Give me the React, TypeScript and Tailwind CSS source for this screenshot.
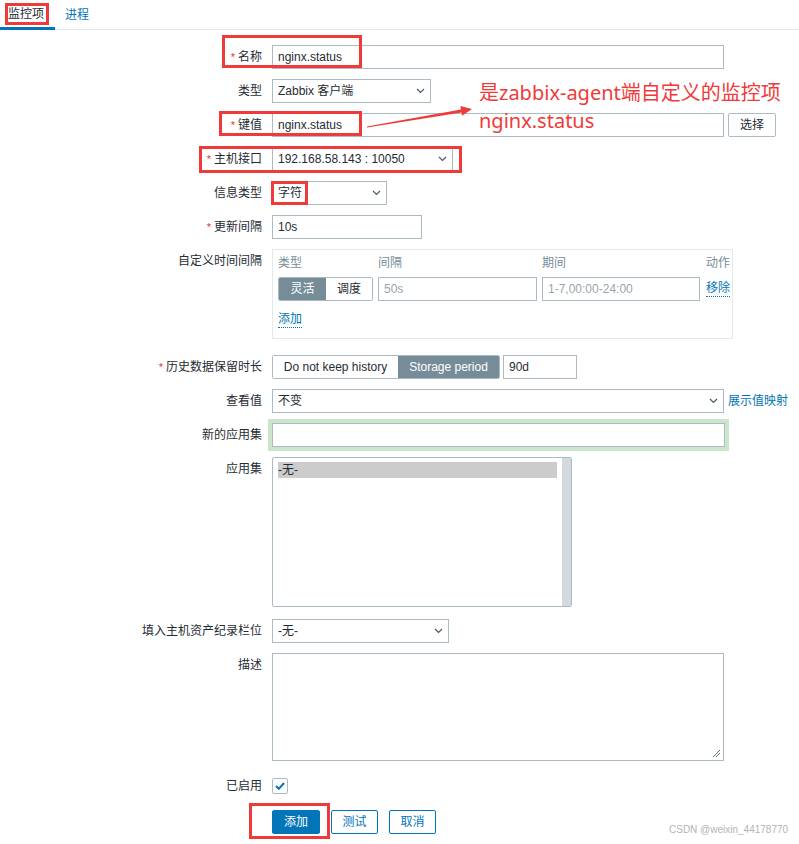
import React from 'react';

function Chevron() {
  return (
    <svg width="9" height="6" viewBox="0 0 9 6" className="shrink-0">
      <path d="M1 1l3.5 3.5L8 1" fill="none" stroke="#4f5a60" strokeWidth="1.2" />
    </svg>
  );
}

function Label({ text, required, className }: { text: string; required?: boolean; className?: string }) {
  return (
    <div className={`w-[262px] h-[24px] shrink-0 flex items-center justify-end whitespace-nowrap ${className ?? ''}`}>
      {required && <span className="text-[#e33734] mr-[3px] text-[11px]">*</span>}
      {text}
    </div>
  );
}

function Row({ label, required, className, labelClass, children }: {
  label: string;
  required?: boolean;
  className?: string;
  labelClass?: string;
  children?: React.ReactNode;
}) {
  return (
    <div className={`flex items-start ${className ?? ''}`}>
      <Label text={label} required={required} className={labelClass} />
      <div className="ml-[10px] flex items-center">{children}</div>
    </div>
  );
}

function Select({ value, width }: { value: string; width: string }) {
  return (
    <div className={`${width} h-[24px] border border-[#acbbc2] bg-white pl-[5px] pr-[5px] flex items-center justify-between`}>
      <span className="whitespace-nowrap">{value}</span>
      <Chevron />
    </div>
  );
}

function TextInput({ value, width, placeholder }: { value?: string; width: string; placeholder?: string }) {
  return (
    <input
      readOnly
      value={value ?? ''}
      placeholder={placeholder}
      className={`${width} h-[24px] border border-[#acbbc2] bg-white px-[5px] text-[12px] text-[#1f2c33] outline-none placeholder:text-[#9aa5ab]`}
    />
  );
}

function RedBox({ className }: { className: string }) {
  return <div className={`absolute border-[3px] border-[#f03a3a] pointer-events-none ${className}`} />;
}

export default function App() {
  return (
    <div className="relative w-[799px] h-[844px] overflow-hidden bg-white text-[12px] text-[#1f2c33] font-[family-name:'Liberation_Sans','Noto_Sans_CJK_SC',sans-serif]">
      {/* tabs */}
      <div className="flex h-[30px] border-b border-[#e3e8ea]">
        <div className="h-[30px] -mb-px w-[55px] pl-[8px] flex items-center border-b-[3px] border-[#0275b8]">监控项</div>
        <div className="h-[30px] -mb-px pl-[10px] flex items-center text-[#0275b8]">进程</div>
      </div>

      <div className="pt-[15px]">
        <Row label="名称" required>
          <TextInput value="nginx.status" width="w-[452px]" />
        </Row>
        <Row label="类型" className="mt-[10px]">
          <Select value="Zabbix 客户端" width="w-[159px]" />
        </Row>
        <Row label="键值" required className="mt-[10px]">
          <TextInput value="nginx.status" width="w-[452px]" />
          <button className="ml-[4px] w-[48px] h-[24px] border border-[#acbbc2] rounded-[2px] bg-white">选择</button>
        </Row>
        <Row label="主机接口" required className="mt-[10px]">
          <Select value="192.168.58.143 : 10050" width="w-[181px]" />
        </Row>
        <Row label="信息类型" className="mt-[10px]">
          <Select value="字符" width="w-[115px]" />
        </Row>
        <Row label="更新间隔" required className="mt-[10px]">
          <TextInput value="10s" width="w-[150px]" />
        </Row>

        {/* custom intervals */}
        <Row label="自定义时间间隔" className="mt-[10px]">
          <div className="w-[461px] h-[90px] border border-[#e3e8ea] pt-[4px] pl-[5px] whitespace-nowrap">
            <div className="flex h-[18px] items-center text-[#768d99]">
              <span className="w-[100px] shrink-0">类型</span>
              <span className="w-[164px] shrink-0">间隔</span>
              <span className="w-[164px] shrink-0">期间</span>
              <span className="shrink-0">动作</span>
            </div>
            <div className="flex items-center mt-[5px] h-[24px]">
              <div className="flex shrink-0 w-[95px] h-[24px] border border-[#acbbc2] rounded-[2px] overflow-hidden">
                <div className="w-[47px] bg-[#768d99] text-white flex items-center justify-center">灵活</div>
                <div className="flex-1 bg-white flex items-center justify-center">调度</div>
              </div>
              <div className="ml-[5px] shrink-0">
                <TextInput placeholder="50s" width="w-[159px]" />
              </div>
              <div className="ml-[5px] shrink-0">
                <TextInput placeholder="1-7,00:00-24:00" width="w-[158px]" />
              </div>
              <span className="ml-[6px] shrink-0 text-[#0275b8] border-b border-dotted border-[#0275b8] leading-[15px]">移除</span>
            </div>
            <div className="mt-[10px] h-[18px] flex items-center">
              <span className="text-[#0275b8] border-b border-dotted border-[#0275b8] leading-[15px]">添加</span>
            </div>
          </div>
        </Row>

        <Row label="历史数据保留时长" required className="mt-[16px]">
          <div className="flex h-[24px] border border-[#acbbc2] rounded-[2px] overflow-hidden">
            <div className="w-[125px] bg-white flex items-center justify-center">Do not keep history</div>
            <div className="w-[101px] bg-[#768d99] text-white flex items-center justify-center">Storage period</div>
          </div>
          <div className="ml-[3px]">
            <TextInput value="90d" width="w-[74px]" />
          </div>
        </Row>

        <Row label="查看值" className="mt-[10px]">
          <Select value="不变" width="w-[452px]" />
          <span className="ml-[4px] text-[#0275b8] whitespace-nowrap">展示值映射</span>
        </Row>

        <Row label="新的应用集" className="mt-[6px]" labelClass="mt-[4px]">
          <div className="-ml-[4px] p-[4px] bg-[#cce6cc]">
            <TextInput width="w-[453px]" />
          </div>
        </Row>

        <Row label="应用集" className="mt-[6px]">
          <div className="w-[300px] h-[150px] border border-[#acbbc2] rounded-[2px] bg-white flex overflow-hidden">
            <div className="flex-1 pt-[4px] pl-[5px]">
              <div className="w-[279px] h-[16px] bg-[#cccccc] flex items-center leading-none">-无-</div>
            </div>
            <div className="w-[9px] bg-[#d3dadf]" />
          </div>
        </Row>

        <Row label="填入主机资产纪录栏位" className="mt-[12px]">
          <Select value="-无-" width="w-[177px]" />
        </Row>

        <Row label="描述" className="mt-[10px]">
          <div className="relative w-[452px] h-[108px] border border-[#acbbc2] bg-white">
            <svg width="9" height="9" viewBox="0 0 9 9" className="absolute right-[2px] bottom-[2px]">
              <path d="M8 1L1 8M8 4L4 8" stroke="#6b7378" strokeWidth="1" fill="none" />
            </svg>
          </div>
        </Row>

        <Row label="已启用" className="mt-[13px]">
          <div className="mt-[4px] w-[16px] h-[16px] border border-[#acbbc2] rounded-[2px] bg-white flex items-center justify-center">
            <svg width="10" height="8" viewBox="0 0 10 8">
              <path d="M1 4l2.8 2.8L9 1" fill="none" stroke="#0275b8" strokeWidth="2" />
            </svg>
          </div>
        </Row>

        <div className="mt-[12px] pl-[272px] flex items-center">
          <button className="w-[48px] h-[24px] rounded-[2px] bg-[#0275b8] border border-[#0275b8] text-white">添加</button>
          <button className="ml-[11px] w-[47px] h-[24px] rounded-[2px] bg-white border border-[#0275b8] text-[#0275b8]">测试</button>
          <button className="ml-[11px] w-[47px] h-[24px] rounded-[2px] bg-white border border-[#0275b8] text-[#0275b8]">取消</button>
        </div>
      </div>

      {/* annotations */}
      <RedBox className="left-[5px] top-[3px] w-[44px] h-[22px]" />
      <RedBox className="left-[222px] top-[35px] w-[140px] h-[33px]" />
      <RedBox className="left-[219px] top-[111px] w-[143px] h-[25px]" />
      <RedBox className="left-[199px] top-[146px] w-[263px] h-[27px]" />
      <RedBox className="left-[271px] top-[181px] w-[37px] h-[24px]" />
      <RedBox className="left-[249px] top-[803px] w-[81px] h-[36px]" />

      <svg className="absolute left-0 top-0 pointer-events-none" width="799" height="844" viewBox="0 0 799 844">
        <polygon
          points="366.9,126.5 460.9,109.4 460.4,106 472,109 462,115.8 461.5,112.4 367.1,127.5"
          fill="#f03a3a"
        />
      </svg>
      <div className="absolute left-[479px] top-[79px] text-[20px] leading-[28px] text-[#f03a3a] whitespace-nowrap font-[family-name:'Noto_Sans','Noto_Sans_CJK_SC',sans-serif]">
        <div>是zabbix-agent端自定义的监控项</div>
        <div>nginx.status</div>
      </div>

      <div className="absolute left-[669px] top-[823px] text-[10px] leading-[14px] text-[#b4b4b4] whitespace-nowrap">
        CSDN @weixin_44178770
      </div>
    </div>
  );
}
